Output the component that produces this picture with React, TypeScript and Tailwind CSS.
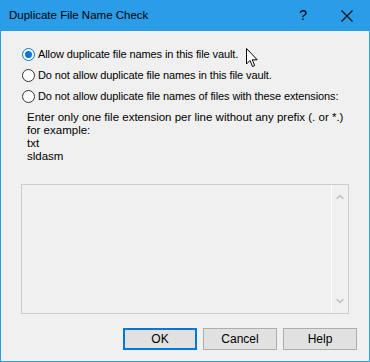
import { ChevronUp, ChevronDown } from "lucide-react";

const font = { fontFamily: '"Liberation Sans", Arial, sans-serif' };

function Radio({ checked, label }: { checked?: boolean; label: string }) {
  return (
    <div className="flex h-[21px] items-center gap-[3px]">
      <span
        className={`flex h-[13px] w-[13px] items-center justify-center rounded-full border bg-white ${
          checked ? "border-[#0078d7]" : "border-[#333333]"
        }`}
      >
        {checked && <span className="h-[7px] w-[7px] rounded-full bg-[#0078d7]" />}
      </span>
      <span className="text-[11px] tracking-[-0.1px] text-black">{label}</span>
    </div>
  );
}

function Button({ label, primary }: { label: string; primary?: boolean }) {
  return (
    <button
      className={`h-[22px] w-[74px] bg-[#e1e1e1] text-[12px] text-black ${
        primary ? "border-2 border-[#0078d7]" : "border border-[#adadad]"
      }`}
    >
      {label}
    </button>
  );
}

export default function App() {
  return (
    <div
      className="relative flex h-[362px] w-[370px] flex-col border-x border-b border-[#2b9de8] bg-[#f0f0f0]"
      style={font}
    >
      <div className="-mx-px flex h-[31px] shrink-0 items-center bg-[#2b9de8] pl-[9px] pr-[17px]">
        <span className="flex-1 text-[11.5px] text-black">Duplicate File Name Check</span>
        <span className="mr-[34px] text-[14px] text-black">?</span>
        <svg width="12" height="12" viewBox="0 0 12 12">
          <path d="M0.5 0.5 L11.5 11.5 M11.5 0.5 L0.5 11.5" stroke="#111" strokeWidth="1.2" />
        </svg>
      </div>

      <div className="flex flex-1 flex-col pt-[13px]">
        <div className="flex flex-col pl-[21px]">
          <Radio checked label="Allow duplicate file names in this file vault." />
          <Radio label="Do not allow duplicate file names in this file vault." />
          <Radio label="Do not allow duplicate file names of files with these extensions:" />
        </div>

        <div className="mt-[4px] pl-[26px] text-[11.5px] leading-[13px] text-black">
          <p>Enter only one file extension per line without any prefix (. or *.)</p>
          <p>for example:</p>
          <p>txt</p>
          <p>sldasm</p>
        </div>

        <div className="mx-[20px] mt-[21px] flex h-[130px] border border-[#cccccc] bg-[#f0f0f0]">
          <div className="flex-1" />
          <div className="flex w-[17px] flex-col items-center justify-between border-l border-white py-[6px] text-[#bcbcbc]">
            <ChevronUp size={12} strokeWidth={2.5} />
            <ChevronDown size={12} strokeWidth={2.5} />
          </div>
        </div>

        <div className="mt-[14px] flex justify-end gap-[6px] pr-[12px]">
          <Button primary label="OK" />
          <Button label="Cancel" />
          <Button label="Help" />
        </div>
      </div>

      <svg
        className="absolute left-[245px] top-[48px]"
        width="13"
        height="20"
        viewBox="0 0 13 20"
      >
        <path
          d="M0.5 0.5 L0.5 16 L4 12.5 L6.5 18.5 L8.7 17.6 L6.3 11.8 L11.2 11.8 Z"
          fill="white"
          stroke="black"
          strokeWidth="1"
          strokeLinejoin="miter"
        />
      </svg>
    </div>
  );
}
